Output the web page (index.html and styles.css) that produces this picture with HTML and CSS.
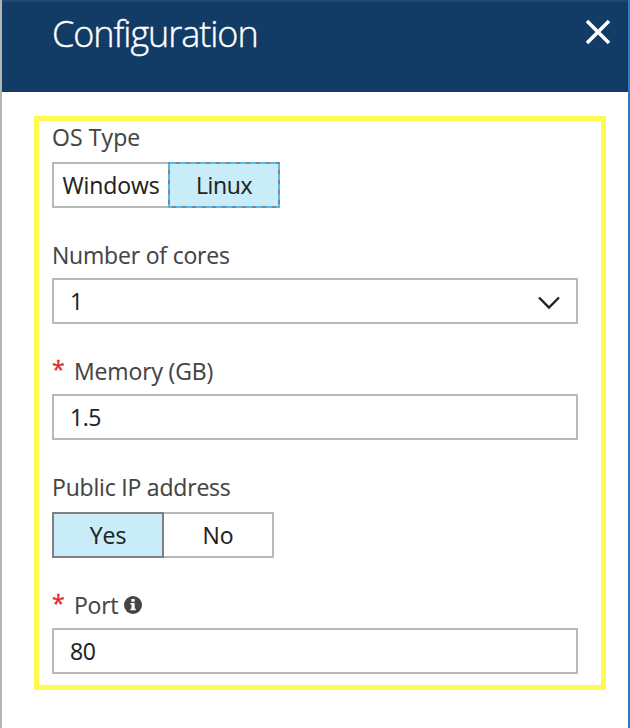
FILE: index.html
```html
<!DOCTYPE html>
<html lang="en">
<head>
<meta charset="utf-8">
<title>Configuration</title>
<link rel="stylesheet" href="styles.css">
</head>
<body>
<main class="blade">
  <header class="header">
    <h1 class="title">Configuration</h1>
    <svg class="close" width="26" height="26" viewBox="0 0 26 26"><path d="M2 2L24 24M24 2L2 24"/></svg>
  </header>
  <form class="form">
    <div class="field toggle-field">
      <div class="label"><span class="os-label">OS Type</span></div>
      <div class="toggle">
        <div class="option windows">Windows</div>
        <div class="option linux">Linux<svg class="focus" width="112" height="46"><rect x="1" y="1" width="110" height="44"/></svg></div>
      </div>
    </div>
    <div class="field">
      <div class="label"><span class="cores-label">Number of cores</span></div>
      <div class="input">1<svg class="chevron" width="24" height="16" viewBox="0 0 24 16"><path d="M2 2.5L12 12.5L22 2.5"/></svg></div>
    </div>
    <div class="field">
      <div class="label"><span class="required">*</span><span class="memory-label">Memory (GB)</span></div>
      <div class="input">1.5</div>
    </div>
    <div class="field toggle-field">
      <div class="label"><span class="ip-label">Public IP address</span></div>
      <div class="toggle">
        <div class="option yes">Yes</div>
        <div class="option no">No</div>
      </div>
    </div>
    <div class="field">
      <div class="label"><span class="required">*</span><span class="port-label">Port</span><svg class="info" width="18" height="18" viewBox="0 0 18 18"><circle cx="9" cy="9" r="9"/><path d="M7.3 3h3.4v2.7H7.3zM6.3 7h4.4v5.7h1.2v1.6H6.3v-1.6h1.2V8.5H6.3z"/></svg></div>
      <div class="input">80</div>
    </div>
  </form>
</main>
</body>
</html>
```
FILE: styles.css
```css
* { box-sizing: border-box; }
body {
  margin: 0;
  background: #fff;
  color: #222;
  font: 23px/30px "Open Sans", "Noto Sans", sans-serif;
  -webkit-text-stroke: 0.12px currentColor;
}
.blade {
  height: 728px;
  border-left: 2px solid #b4b4b4;
  border-right: 2px solid #3478c0;
  overflow: hidden;
}
.header {
  display: flex;
  justify-content: space-between;
  height: 92px;
  margin-left: -2px;
  padding: 8px 17px 0 50px;
  border-top: 2px solid #204872;
  border-left: 2px solid #29527a;
  background: #123c66;
  color: #fff;
}
.title {
  margin: 0;
  font-size: 36px;
  font-weight: 300;
  line-height: 48px;
  letter-spacing: -1.05px;
  -webkit-text-stroke-width: 0.4px;
}
.close { margin-top: 9px; fill: none; stroke: #fff; stroke-width: 3.6; }
.form {
  display: flex;
  flex-direction: column;
  gap: 32px;
  width: 572px;
  height: 574px;
  margin: 24px 0 0 32px;
  padding: 1px 22px 0 13px;
  border: 5px solid #fffa50;
}
.label {
  display: flex;
  height: 30px;
  margin-bottom: 8px;
  color: #444;
}
.toggle-field .label { margin-bottom: 10px; }
.os-label { letter-spacing: 0.1px; }
.cores-label { letter-spacing: -0.2px; }
.memory-label { letter-spacing: -0.15px; }
.ip-label { letter-spacing: -0.2px; }
.port-label { letter-spacing: -0.25px; }
.required { width: 22px; line-height: 27px; color: #e22b2b; -webkit-text-stroke-width: 0.4px; }
.input {
  display: flex;
  align-items: center;
  justify-content: space-between;
  width: 526px;
  height: 46px;
  padding: 0 15px 0 16px;
  border: 2px solid #b9b9b9;
  letter-spacing: -0.5px;
}
.chevron { margin-top: 3px; fill: none; stroke: #222; stroke-width: 2.4; }
.toggle { display: flex; height: 46px; }
.option {
  display: flex;
  align-items: center;
  justify-content: center;
  border: 2px solid #b9b9b9;
}
.windows { width: 116px; border-right: 0; letter-spacing: -0.1px; }
.linux { position: relative; width: 112px; border-color: #4bbbf1; background: #c9edf8; letter-spacing: -0.4px; }
.focus { position: absolute; left: -2px; top: -2px; fill: none; stroke: #868686; stroke-width: 2; stroke-dasharray: 4 6; stroke-dashoffset: -7; }
.yes { width: 112px; border-color: #808080; background: #c9edf8; }
.no { width: 110px; border-left: 0; }
.info { margin: 6px 0 0 6px; fill: #444; }
.info path { fill: #fff; }
```
